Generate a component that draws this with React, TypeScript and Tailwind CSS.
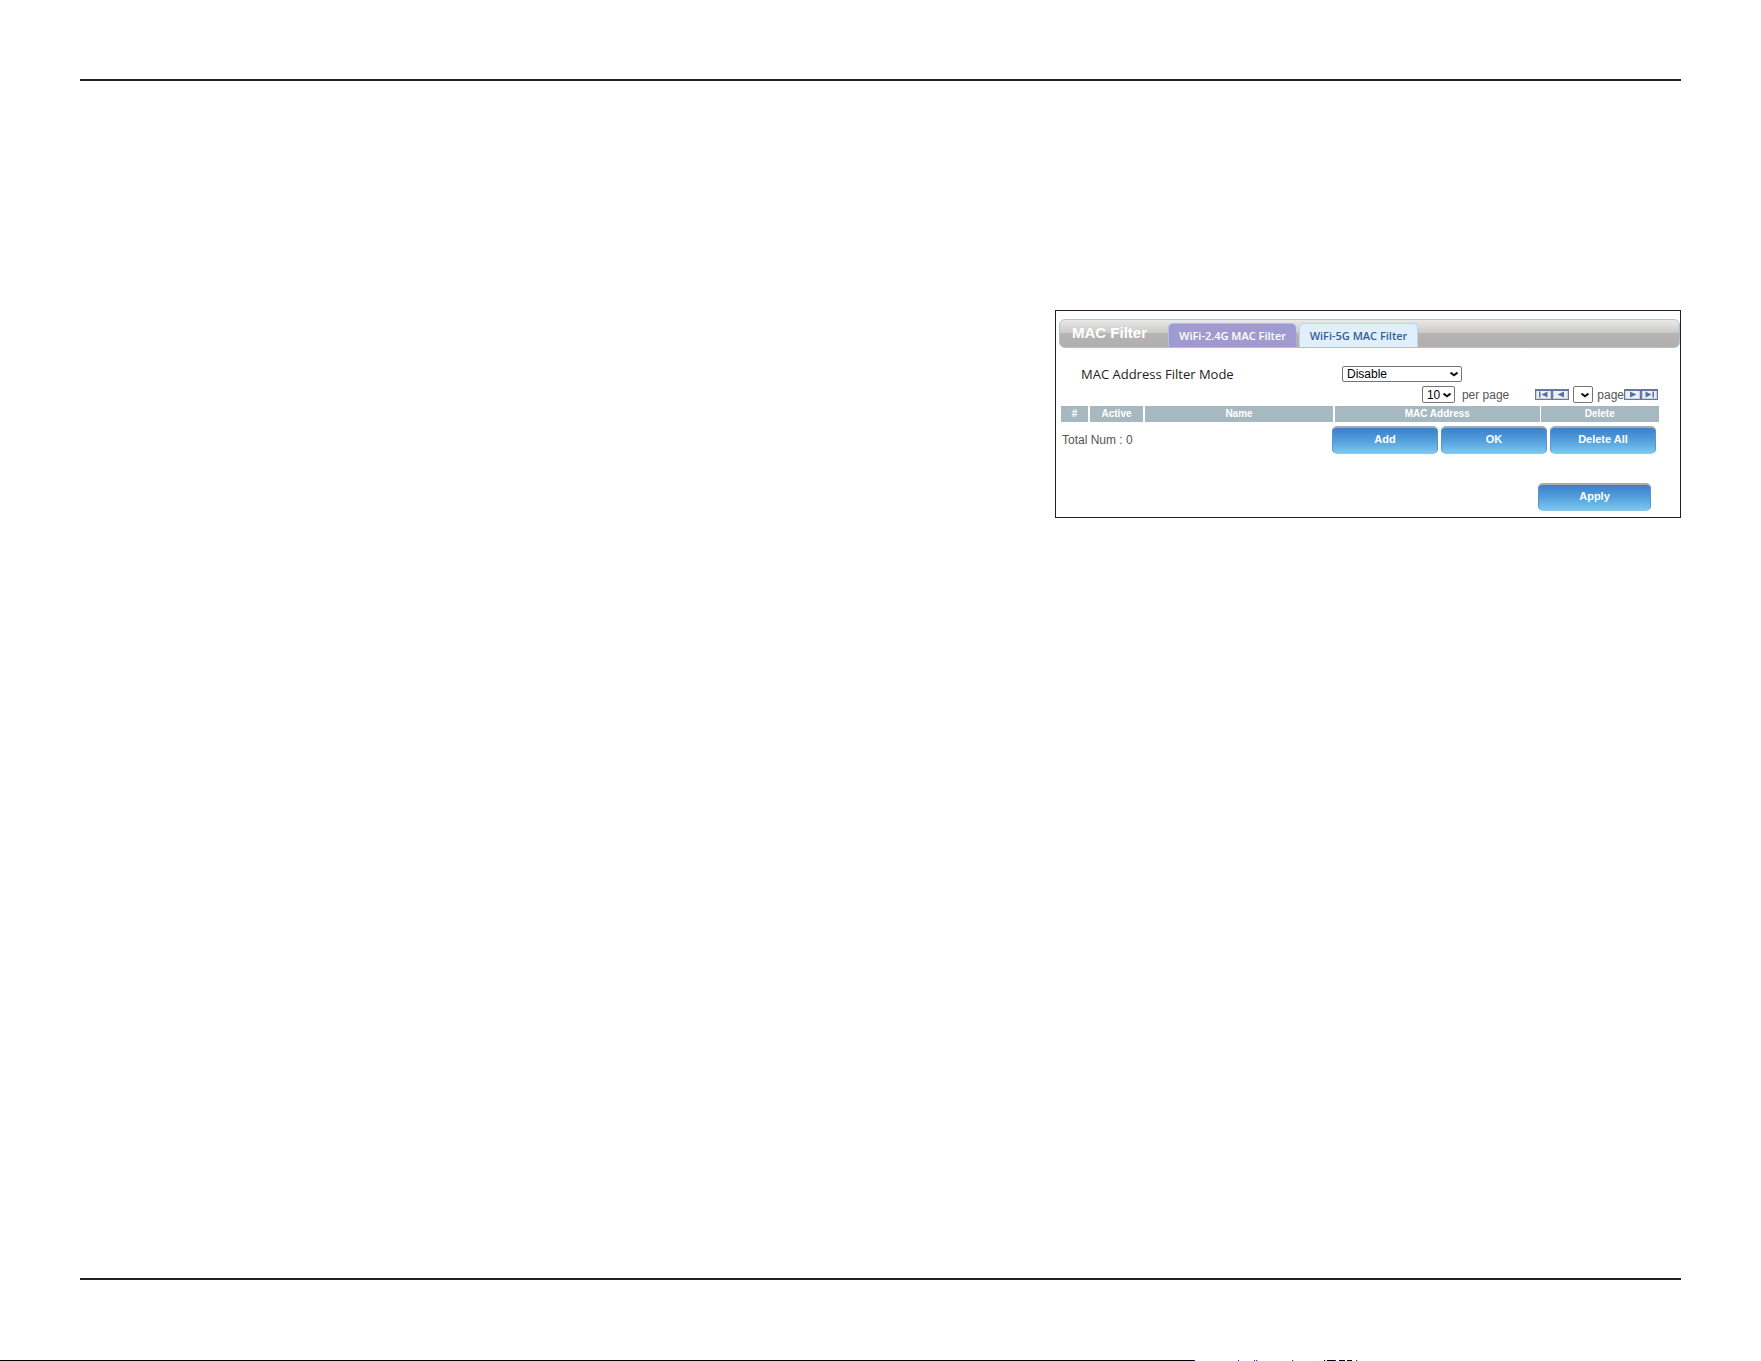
import React from 'react';

type SelectBoxProps = {
  id: string;
  label: string;
  options: string[];
  className: string;
};

const SelectBox: React.FC<SelectBoxProps> = ({ id, label, options, className }) => (
  <span className={`relative inline-block shrink-0 ${className}`}>
    <select
      id={id}
      aria-label={label}
      className="block w-full h-full appearance-none border border-[#767676] rounded-xs bg-white pl-1 text-xs leading-3 text-black"
    >
      {options.map((option) => (
        <option key={option}>{option}</option>
      ))}
    </select>
    <svg
      className="absolute right-1 inset-y-0 my-auto w-2 h-1.5 pointer-events-none"
      viewBox="0 0 8 6"
      fill="none"
      stroke="#111111"
      strokeWidth="2"
    >
      <path d="M0.5 1.5 L4 4.2 L7.5 1.5" />
    </svg>
  </span>
);

const pagerPaths = {
  First: 'M4 2.5h1.5v6H4z M12.5 2.5v6L6.5 5.5z',
  Previous: 'M12 2.5v6L5.5 5.5z',
  Next: 'M6 2.5v6L12.5 5.5z',
  Last: 'M4.5 2.5v6L10.5 5.5z M11.5 2.5H13v6h-1.5z',
};

const PagerButton: React.FC<{ name: keyof typeof pagerPaths }> = ({ name }) => (
  <button type="button" aria-label={`${name} page`} className="block">
    <svg className="block w-[17px] h-[11px]" viewBox="0 0 17 11">
      <rect width="17" height="11" fill="#66799a" />
      <rect x="1" y="2" width="15" height="8" fill="#c9d0de" />
      <rect x="2" y="2" width="13" height="7" fill="#eef0f5" />
      <path d={pagerPaths[name]} fill="#5272a8" />
    </svg>
  </button>
);

const BlueButton: React.FC<{ children: React.ReactNode; className: string }> = ({ children, className }) => (
  <button
    type="button"
    className={`h-7 pb-1 rounded-[5px] border-t-2 border-t-[#aaa9ac] border-x border-x-[#5c93cf] border-b border-b-[#8bc5e8] bg-linear-to-b from-[#3c7fca] via-[#529fdc] to-[#7cc8f1] text-[11px] leading-4 font-bold text-white ${className}`}
  >
    {children}
  </button>
);

const MacFilterPanel: React.FC = () => {
  return (
    <section className="border border-[#231f20] bg-white pt-2 pl-[3px] pb-1.5">
      <header className="flex items-end h-[29px] pl-3 rounded-md border border-[#a9c3dc] bg-[linear-gradient(#e9e9e8,#c9c8c7_50%,#b7b5b4_50%,#b1afae)]">
        <h1 className="w-24 pb-1.5 text-[15px] leading-4 font-bold text-white">MAC Filter</h1>
        <nav className="flex gap-[3px] font-['Open_Sans',sans-serif] text-[11px] leading-6 font-semibold text-center">
          <a href="#wifi-24" className="w-32 h-6 rounded-t-[5px] border-t border-l border-[#a9c3e4] bg-[#9f9bd0] text-white">
            WiFi-2.4G MAC Filter
          </a>
          <a href="#wifi-5" className="w-[119px] h-6 rounded-t-[5px] border-t border-x border-[#b9d4ec] bg-[#e1effa] text-[#345e9b]">
            WiFi-5G MAC Filter
          </a>
        </nav>
      </header>

      <div className="flex items-center h-4 mt-[18px] pl-[22px]">
        <label htmlFor="mode" className="w-[261px] font-['Open_Sans',sans-serif] text-[13px] leading-4 text-[#222222]">
          MAC Address Filter Mode
        </label>
        <SelectBox id="mode" label="MAC Address Filter Mode" options={['Disable', 'Allow', 'Deny']} className="w-30 h-4" />
      </div>

      <div className="flex items-center justify-end h-[17px] mt-1 pr-[22px] text-xs leading-4 text-[#555555]">
        <SelectBox id="per-page" label="Rows per page" options={['10', '20', '50']} className="w-[33px] h-[17px]" />
        <label htmlFor="per-page" className="ml-[7px] mr-[26px] whitespace-nowrap">per page</label>
        <PagerButton name="First" />
        <PagerButton name="Previous" />
        <SelectBox id="page" label="Page number" options={['']} className="w-5 h-[17px] mx-1" />
        <label htmlFor="page">page</label>
        <PagerButton name="Next" />
        <PagerButton name="Last" />
      </div>

      <div className="pl-0.5 pr-[21px] mt-[3px]">
        <table className="w-full table-fixed border-collapse text-[10px] leading-4 font-bold text-white">
          <thead>
            <tr className="h-4 bg-[#a7b9c0]">
              <th className="p-0 w-7">#</th>
              <th className="p-0 w-[55px] border-l-2 border-white">Active</th>
              <th className="p-0 w-[190px] border-l-2 border-white">Name</th>
              <th className="p-0 w-[206px] border-l-2 border-white">MAC Address</th>
              <th className="p-0 border-l border-white">Delete</th>
            </tr>
          </thead>
        </table>
        <div className="flex items-center mt-1 pl-px pr-[3px]">
          <p className="flex-1 text-xs leading-4 text-[#555555]">Total Num : 0</p>
          <div className="flex gap-[3px]">
            <BlueButton className="w-[106px]">Add</BlueButton>
            <BlueButton className="w-[106px]">OK</BlueButton>
            <BlueButton className="w-[106px]">Delete All</BlueButton>
          </div>
        </div>
        <div className="flex justify-end mt-[29px] pr-2">
          <BlueButton className="w-[113px]">Apply</BlueButton>
        </div>
      </div>
    </section>
  );
};

const App: React.FC = () => {
  return (
    <div className="min-h-screen flex flex-col bg-white font-['Liberation_Sans',Arial,sans-serif]">
      <main className="flex-1 flex flex-col mx-20 mt-[79px]">
        <hr className="border-t-2 border-[#231f20]" />
        <div className="flex-1 grid grid-cols-[975fr_626fr] items-start pt-[229px]">
          <div />
          <MacFilterPanel />
        </div>
        <hr className="border-t-2 border-[#231f20]" />
      </main>
      <footer className="flex pt-20">
        <svg className="block w-full h-px" viewBox="0 0 1761 1" preserveAspectRatio="xMinYMin slice">
          <rect width="1194" height="1" fill="#000000" />
          <path d="M1194 0h1v1h-1z M1238 0h1v1h-1z M1254 0h1v1h-1z M1335 0h1v1h-1z" fill="#1a1ae0" />
          <path d="M1256 0h1v1h-1z M1292 0h1v1h-1z M1356 0h1v1h-1z" fill="#c01030" />
          <path d="M1257 0h1v1h-1z M1293 0h1v1h-1z M1325 0h1v1h-1z M1357 0h1v1h-1z" fill="#8fe8e8" />
          <path d="M1324 0h1v1h-1z M1327 0h8v1h-8z M1339 0h6v1h-6z M1347 0h5v1h-5z" fill="#000000" />
        </svg>
      </footer>
    </div>
  );
};

export default App;
